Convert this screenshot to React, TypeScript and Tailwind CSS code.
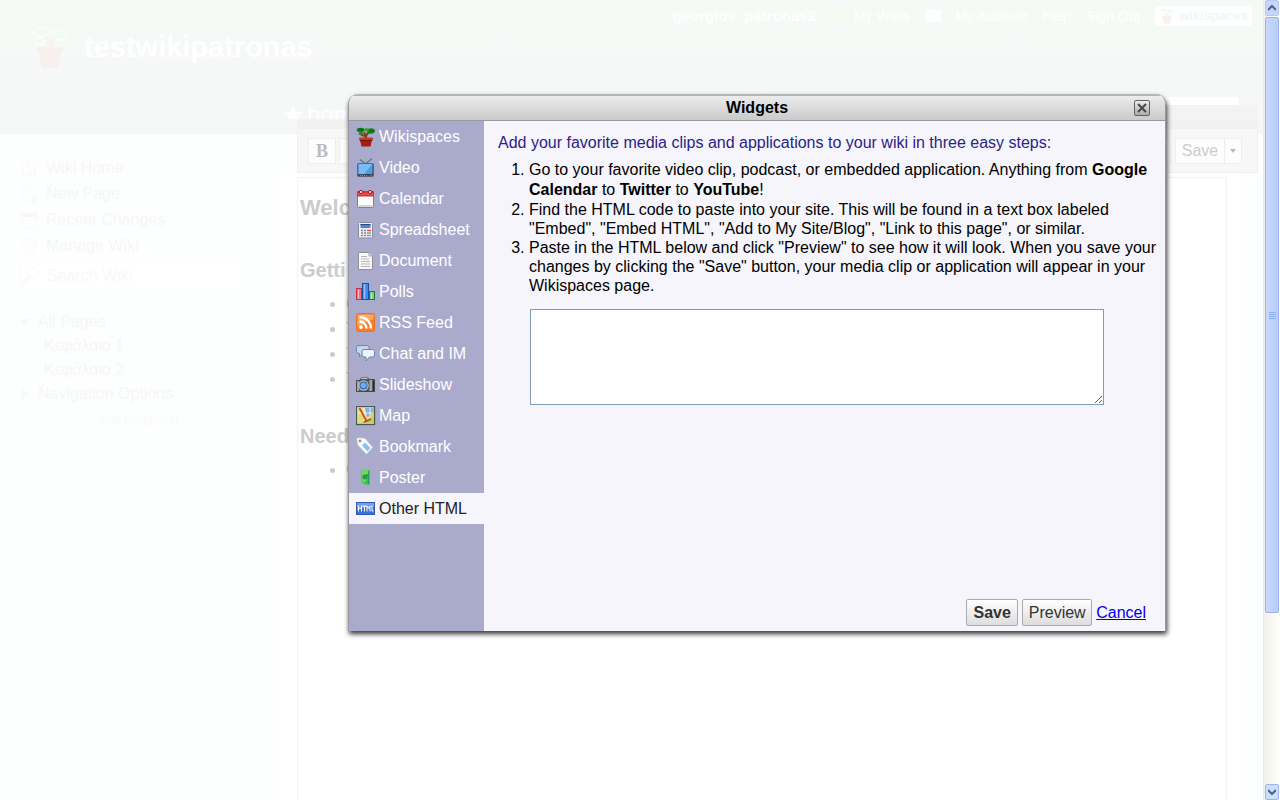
import React, { useState } from 'react';
import clsx from 'clsx';

interface Widget {
    name: string;
    icon: React.ReactNode;
}

const PlantIcon: React.FC<{ className?: string }> = ({ className }) => (
    <svg viewBox="0 0 20 20" className={className} aria-hidden="true">
        <path d="M9.500 12C9 9 9.500 7 8 5M10 11c0-3 1-5 4-6M9.500 9L5 8" stroke="#8a3a1c" strokeWidth="2" fill="none" />
        <ellipse cx="4.500" cy="3" rx="3.800" ry="2.200" fill="#157a1c" />
        <ellipse cx="15" cy="4" rx="4" ry="2.800" fill="#118516" />
        <ellipse cx="5" cy="6.500" rx="2.500" ry="1.500" fill="#1c8a20" />
        <ellipse cx="10.500" cy="2.800" rx="2.500" ry="1.800" fill="#2ea62c" />
        <path d="M2.500 3l5-.5M13 4l4-.5" stroke="#0a4d10" strokeWidth="0.800" />
        <path d="M4 13h12l-1.500 6.500h-9z" fill="#a81c12" />
        <rect x="3" y="10.500" width="14" height="3" rx="1" fill="#c23a26" />
        <path d="M4 13.500h12" stroke="#741008" />
    </svg>
);

const FaintPlantIcon: React.FC<{ className?: string }> = ({ className }) => (
    <svg viewBox="0 0 36 42" className={className} aria-hidden="true">
        <path d="M18 20c-3-5-1-9-6-12M19 20c0-6 3-9 7-12" stroke="#fbf1ee" strokeWidth="3" fill="none" />
        <ellipse cx="10" cy="5" rx="9" ry="4" fill="#f2faf3" stroke="#fbfefb" strokeWidth="1.500" />
        <ellipse cx="28" cy="8" rx="7" ry="5" fill="#f2faf3" stroke="#fbfefb" strokeWidth="1.500" />
        <ellipse cx="8" cy="14" rx="5" ry="3" fill="#f2faf3" stroke="#fbfefb" strokeWidth="1.500" />
        <path d="M5 20h26v5h-2l-3 16H10L7 25H5z" fill="#f8efef" />
    </svg>
);

/**
 * Widget categories, in the order of the menu
 */
const widgets: Widget[] = [
    { name: 'Wikispaces', icon: <PlantIcon className="size-5" /> },
    {
        name: 'Video',
        icon: (
            <svg viewBox="0 0 20 20" className="size-5" aria-hidden="true">
                <path d="M4 1.500l5 4M16 .5l-6 5" stroke="#5d7390" strokeWidth="1.200" />
                <rect x="1.500" y="5.500" width="16" height="13" rx="1" fill="#3d4654" stroke="#62656d" />
                <rect x="2.500" y="6" width="14" height="10" fill="#4b9be8" />
                <path d="M2.500 6h14L8 16H2.500z" fill="#79bbf5" />
                <path d="M4 17.500h7" stroke="#8b8f96" strokeDasharray="1 1" />
                <path d="M14 17.500h2" stroke="#e33" />
            </svg>
        ),
    },
    {
        name: 'Calendar',
        icon: (
            <svg viewBox="0 0 20 20" className="size-5" aria-hidden="true">
                <rect x="1.500" y="2.500" width="16" height="16" rx="1" fill="#fbfbfb" stroke="#8c7a86" />
                <rect x="1" y="2" width="17" height="5.500" rx="1" fill="#dc2f36" />
                <path d="M2 5h15" stroke="#f0666a" />
                <circle cx="5" cy="3" r="1.600" fill="#fbeaea" stroke="#8a1a22" />
                <circle cx="14" cy="3" r="1.600" fill="#fbeaea" stroke="#8a1a22" />
                <path d="M2.500 17h14" stroke="#d5d5dc" strokeWidth="2" />
            </svg>
        ),
    },
    {
        name: 'Spreadsheet',
        icon: (
            <svg viewBox="0 0 20 20" className="size-5" aria-hidden="true">
                <rect x="2.500" y="2.500" width="14" height="15.500" rx="1" fill="#f0f1f4" stroke="#8b8c97" />
                <rect x="4.500" y="4" width="10" height="4" fill="#5584cf" />
                <path d="M4.500 4.500h10" stroke="#274887" />
                <path d="M5 10.500h7M5 13h7M5 15.500h7" stroke="#7c879c" strokeWidth="1.500" strokeDasharray="2 1" />
                <path d="M12 10.500h3" stroke="#ea4a32" strokeWidth="1.500" />
                <path d="M12 13h3M12 15.500h3" stroke="#8d95b8" strokeWidth="1.500" />
            </svg>
        ),
    },
    {
        name: 'Document',
        icon: (
            <svg viewBox="0 0 20 20" className="size-5" aria-hidden="true">
                <path d="M2.500 1.500h10.500l3.500 3.500v13.500h-14z" fill="#fafafa" stroke="#8f8f99" />
                <path d="M13 1.500V5h3.500" fill="#dcdce2" stroke="#a5a5ad" />
                <path d="M5 5.500h6M5 8h8M5 10.500h9M5 13h9M5 15.500h9" stroke="#b5b5bb" />
            </svg>
        ),
    },
    {
        name: 'Polls',
        icon: (
            <svg viewBox="0 0 20 20" className="size-5" aria-hidden="true">
                <rect x="0.500" y="6.500" width="5" height="11" fill="#f0747c" stroke="#c8323e" />
                <rect x="6.500" y="1.500" width="6" height="16" fill="#4589e8" stroke="#1c4bb4" />
                <path d="M8.500 2v15" stroke="#93c5fb" strokeWidth="1.500" />
                <rect x="13.500" y="9.500" width="5" height="8" fill="#7ccf88" stroke="#1f7a34" />
                <path d="M2.500 8v9M15.500 11v6" stroke="#fff" opacity=".5" />
            </svg>
        ),
    },
    {
        name: 'RSS Feed',
        icon: (
            <svg viewBox="0 0 20 20" className="size-5" aria-hidden="true">
                <rect x="0.500" y="0.500" width="18" height="18" rx="2" fill="#f87d27" stroke="#f0701e" />
                <path d="M1.500 1.500h16v5q-8 1-16 8z" fill="#fba869" />
                <circle cx="5" cy="14" r="1.900" fill="#fff" />
                <path d="M3.500 8.500a7 7 0 0 1 7 7M3.500 4a11.500 11.500 0 0 1 11.500 11.500" stroke="#fff" strokeWidth="2.400" fill="none" />
            </svg>
        ),
    },
    {
        name: 'Chat and IM',
        icon: (
            <svg viewBox="0 0 20 20" className="size-5" aria-hidden="true">
                <path d="M2 1.500h9q2 0 2 2v4q0 2-2 2H7l-3.500 3.500v-3.500Q1 9.500 .5 7.500V3.500q0-2 1.500-2z" fill="#c3d6ee" stroke="#6b87b0" />
                <path d="M8 5.500h8.500q2 0 2 2V11q0 2-2 2h-3l-3.500 4v-4H8q-2 0-2-2V7.500q0-2 2-2z" fill="#edf3fb" stroke="#6486b4" />
            </svg>
        ),
    },
    {
        name: 'Slideshow',
        icon: (
            <svg viewBox="0 0 20 20" className="size-5" aria-hidden="true">
                <path d="M.5 5.500h3l2-2.500h6l2 1.500h5v12H.5z" fill="#55575c" stroke="#44464a" />
                <path d="M1 6h2v10H1zM13.500 5h2.500v11h-2.500z" fill="#a4a6ab" />
                <path d="M5.500 3.500h6" stroke="#c6c6ca" />
                <circle cx="7.500" cy="10.500" r="5.200" fill="#b7bcc6" />
                <circle cx="7.500" cy="10.500" r="4" fill="#3d6eae" />
                <circle cx="7.500" cy="10.500" r="2.800" fill="#6aaef0" />
                <path d="M17.500 6v10" stroke="#2a2a2c" />
            </svg>
        ),
    },
    {
        name: 'Map',
        icon: (
            <svg viewBox="0 0 20 20" className="size-5" aria-hidden="true">
                <rect x="0.500" y="0.500" width="18" height="18" fill="#dfe6a4" stroke="#4b5553" strokeWidth="1.300" />
                <path d="M9 2h8.500v7L11 11z" fill="#82afe6" />
                <path d="M1.500 1.500h4l5 13h-9z" fill="#d9dd7c" />
                <path d="M8 2v14M2 7h15M14 2v15" stroke="#f8f4cf" />
                <path d="M3 17.500L17.500 10v7.500z" fill="#b5cf69" />
                <path d="M2 16l6-4 4 2 5-6" stroke="#f3d34f" strokeWidth="1.500" fill="none" />
                <path d="M3.500 2l7 13M15 13l-4 2-3 1" stroke="#e0382b" strokeWidth="1.600" fill="none" />
            </svg>
        ),
    },
    {
        name: 'Bookmark',
        icon: (
            <svg viewBox="0 0 20 20" className="size-5" aria-hidden="true">
                <path d="M.5 2L2 .5l7 .5L17 10.500 10.500 17.500 1.500 8z" fill="#fafbfc" stroke="#b2b6c2" />
                <path d="M6 8.500L9 5.500l5.500 5.500-3 3.500z" fill="#86c4f8" />
                <circle cx="4" cy="4" r="1.400" fill="#8b91a5" />
            </svg>
        ),
    },
    {
        name: 'Poster',
        icon: (
            <svg viewBox="0 0 20 20" className="size-5" aria-hidden="true">
                <path d="M5 3l8-1v14l-1.500 1L6 15z" fill="#3cc243" />
                <path d="M5 3l8-1-.5 5L6 8z" fill="#66de4f" />
                <path d="M7 7l5-1-1 5H7z" fill="#2a9a4a" />
                <path d="M6 11l5 1-4 3z" fill="#6ce05a" />
                <path d="M12 3l1.500-1v14L12 17z" fill="#2c9f58" />
            </svg>
        ),
    },
    {
        name: 'Other HTML',
        icon: (
            <svg viewBox="0 0 20 20" className="size-5" aria-hidden="true">
                <rect x="0.500" y="3.500" width="18" height="12" fill="#3a73d2" stroke="#2d5db6" />
                <path d="M1 4h17v4Q10 7 1 11z" fill="#6f9fea" />
                <path d="M2.500 6.500v6M5.500 6.500v6M2.500 9.500h3M6.500 7h4M8.500 7v5.500M11 12.500V7l1.500 2.500L14 7v5.500M16 6.500V12h1.500" stroke="#fff" fill="none" />
            </svg>
        ),
    },
];

const AccountBar: React.FC = () => (
    <nav className="flex h-8 items-center justify-end gap-[5px] pr-[11px] text-sm text-white">
        <b className="mr-2 text-[15px]">georgios_patronas2</b>
        <svg viewBox="0 0 20 16" className="h-4 w-5" aria-hidden="true">
            <path d="M2 14Q2 5 11 5V1l7 6-7 5V9Q5 9 2 14z" fill="#f6fae9" />
        </svg>
        <a href="#wikis">My Wikis</a>
        <span>·</span>
        <svg viewBox="0 0 18 14" className="h-3 w-4" aria-hidden="true">
            <rect width="18" height="14" fill="#fff" />
            <path d="M3 2l6 5 6-5" stroke="#f5f8f7" fill="none" />
        </svg>
        <span>·</span>
        <a href="#account">My Account</a>
        <span>·</span>
        <a href="#help">Help</a>
        <span>·</span>
        <a href="#signout">Sign Out</a>
        <span>·</span>
        <a href="#wikispaces" className="flex h-5 w-[97px] items-center gap-1 rounded-sm bg-white px-1 text-[13px] font-bold text-[#f3f6f4]">
            <FaintPlantIcon className="size-4" />
            wikispaces
        </a>
    </nav>
);

const SideNav: React.FC = () => (
    <aside className="w-[279px] shrink-0 border-r border-[#fbfdfc] pt-[21px] pl-5 text-[#f6f6f6]">
        <ul>
            <li className="flex h-[26px] items-center gap-2">
                <svg viewBox="0 0 18 18" className="size-[18px]" fill="none" stroke="#fcf5f5" aria-hidden="true">
                    <path d="M0 9l9-8 9 8M3 8v9h12V8M7 17v-5h4v5M8 5h2v3H8z" />
                </svg>
                <a href="#home">Wiki Home</a>
            </li>
            <li className="flex h-[26px] items-center gap-2">
                <svg viewBox="0 0 18 18" className="size-[18px]" fill="none" stroke="#f9fbfb" aria-hidden="true">
                    <path d="M2 1h9l4 4v12H2zM11 1v4h4" />
                    <path d="M14 11v6M11 14h6" stroke="#f1fcf3" strokeWidth="3" />
                </svg>
                <a href="#new">New Page</a>
            </li>
            <li className="flex h-[26px] items-center gap-2">
                <svg viewBox="0 0 18 18" className="size-[18px]" fill="none" stroke="#faf8f9" aria-hidden="true">
                    <path d="M1 2h16v15H1z" />
                    <path d="M1 4h16" stroke="#fdf4f4" strokeWidth="4" />
                </svg>
                <a href="#changes">Recent Changes</a>
            </li>
            <li className="flex h-[26px] items-center gap-2">
                <svg viewBox="0 0 18 18" className="size-[18px]" fill="none" stroke="#fafafa" aria-hidden="true">
                    <circle cx="9" cy="9" r="6.500" strokeWidth="3" strokeDasharray="3 2" />
                    <circle cx="9" cy="9" r="3" />
                </svg>
                <a href="#manage">Manage Wiki</a>
            </li>
        </ul>
        <label className="mt-1 flex h-[26px] w-[223px] items-center gap-2 border border-[#fafbfb] bg-white">
            <svg viewBox="0 0 18 18" className="size-[18px]" fill="none" stroke="#fafafa" strokeWidth="1.500" aria-hidden="true">
                <circle cx="12" cy="6" r="5" />
                <path d="M8 10l-7 7" strokeWidth="3" />
            </svg>
            <input type="text" placeholder="Search Wiki" aria-label="Search Wiki" className="w-40 outline-none placeholder:text-[#f8f8f8]" />
        </label>
        <ul className="mt-[21px] leading-6">
            <li className="flex items-center gap-2">
                <svg viewBox="0 0 10 10" className="size-[10px]" aria-hidden="true"><path d="M0 2h10L5 9z" fill="#f8f8f8" /></svg>
                <a href="#all">All Pages</a>
            </li>
            <li className="pl-6"><a href="#chapter1">Κεφάλαιο 1</a></li>
            <li className="pl-6"><a href="#chapter2">Κεφάλαιο 2</a></li>
            <li className="flex items-center gap-2">
                <svg viewBox="0 0 10 10" className="size-[10px]" aria-hidden="true"><path d="M2 0v10l7-5z" fill="#f8f8f8" /></svg>
                <a href="#nav">Navigation Options</a>
            </li>
        </ul>
        <a href="#edit" className="block pr-[18px] text-center text-xs leading-7 text-[#fafafa]">edit navigation</a>
    </aside>
);

const Editor: React.FC = () => (
    <main className="z-10 -mt-[37px] flex min-w-0 flex-1 flex-col">
        {/* page title, cut off by the toolbar */}
        <div className="flex h-[22px]">
            <div className="flex flex-1 items-start gap-1 overflow-hidden pl-1 text-2xl leading-9 text-white">
                <svg viewBox="0 0 20 20" className="mt-2 size-5 shrink-0" fill="currentColor" aria-hidden="true">
                    <path d="M10 0l2.800 6.700 7.200.6-5.500 4.700 1.700 7L10 15.200 3.800 19l1.700-7L0 7.300l7.200-.6z" />
                </svg>
                home
            </div>
            <div className="mr-[5px] flex w-[140px] flex-col">
                <div className="mr-5 h-2 bg-white" />
                <div className="flex-1 rounded-tr-sm bg-[#f3f3f3]" />
            </div>
        </div>
        <div className="mr-[5px] ml-[18px] h-[9px] border-t border-[#f4f2f2] bg-[#f1f1f1]" />
        <div className="mr-[5px] ml-[18px] flex h-[45px] items-center gap-[3px] border border-[#f5eeef] bg-[#f7f7f7] px-[10px] text-[#ccc]">
            <button className="h-[26px] w-[28px] border border-[#eee] bg-[#fdfdfd] font-['Liberation_Serif',serif] text-lg leading-5 font-bold text-[#bbb]">B</button>
            <button className="h-[26px] w-[28px] border border-[#eee] bg-[#fdfdfd] font-['Liberation_Serif',serif] text-lg leading-5 italic">I</button>
            <div className="mr-[2px] ml-auto h-[26px] w-6 border border-[#eee] bg-[#fdfdfd]" />
            <div className="mr-[5px] flex h-[26px] border border-[#eee] bg-[#fdfdfd]">
                <button className="w-[48px]">Save</button>
                <button className="flex w-[17px] items-center justify-center border-l border-[#eee]" aria-label="More save options">
                    <svg viewBox="0 0 6 4" className="h-1 w-[6px]" fill="#bbb" aria-hidden="true"><path d="M0 0h6L3 4z" /></svg>
                </button>
            </div>
        </div>
        <div className="mr-6 flex flex-1 bg-white pr-3 pl-[18px]">
            <article className="mt-1 flex-1 border border-b-0 border-[#f2f0fb] pl-[2px] text-[#ccc]">
                <h1 className="mt-4 text-[22px] leading-7 font-bold">Welc</h1>
                <h2 className="mt-[34px] text-xl leading-7 font-bold">Getti</h2>
                <ul className="mt-[7px] list-disc pl-[46px] leading-[25px]">
                    <li>C</li>
                    <li>T</li>
                    <li>T</li>
                    <li>T</li>
                </ul>
                <h2 className="mt-[31px] text-xl leading-7 font-bold">Need</h2>
                <ul className="mt-[7px] list-disc pl-[46px] leading-[25px]">
                    <li>C</li>
                </ul>
            </article>
        </div>
    </main>
);

const ScrollBar: React.FC = () => (
    <div className="flex w-[17px] shrink-0 flex-col border-l border-[#ecebe6] bg-linear-to-r from-[#f2f1eb] to-[#fefefb] px-px" aria-hidden="true">
        <div className="flex h-4 items-center justify-center rounded-xs border border-[#b5c8f3] bg-[#c5d6fd]">
            <svg viewBox="0 0 8 6" className="h-[6px] w-2" fill="none" stroke="#4d6185" strokeWidth="2"><path d="M0 5l4-4 4 4" /></svg>
        </div>
        <div className="mt-px flex flex-[596] flex-col items-center justify-center gap-px rounded-xs border border-[#9bb4ee] bg-linear-to-r from-[#c9d8fd] to-[#b8cdfa]">
            <i className="h-px w-[7px] bg-[#8ab0f8]" />
            <i className="h-px w-[7px] bg-[#8ab0f8]" />
            <i className="h-px w-[7px] bg-[#8ab0f8]" />
            <i className="h-px w-[7px] bg-[#8ab0f8]" />
        </div>
        <div className="flex-[171]" />
        <div className="flex h-4 items-center justify-center rounded-xs border border-[#9db5ec] bg-[#c9e0fc]">
            <svg viewBox="0 0 8 6" className="h-[6px] w-2" fill="none" stroke="#4d6185" strokeWidth="2"><path d="M0 1l4 4 4-4" /></svg>
        </div>
    </div>
);

const WidgetDialog: React.FC = () => {
    const [selected, setSelected] = useState<string>('Other HTML');
    const [html, setHtml] = useState<string>('');

    return (
        <div
            role="dialog"
            aria-labelledby="widgets-title"
            className="w-[818px] overflow-hidden rounded-t-[10px] border-x border-[#999] bg-[#f5f5fb] text-black shadow-[1px_3px_5px_rgba(0,0,0,0.8)]"
        >
            <header className="flex h-[27px] items-center border-t-2 border-b border-t-[#b5b5b5] border-b-[#999] bg-linear-to-b from-[#ececec] to-[#cacaca] pr-[15px] pl-[31px]">
                <h2 id="widgets-title" className="flex-1 text-center leading-5 font-bold">Widgets</h2>
                <button aria-label="Close" className="flex size-4 items-center justify-center rounded-xs border border-[#606060] bg-linear-to-b from-[#eee] to-[#aaa]">
                    <svg viewBox="0 0 12 12" className="size-3" stroke="#4a4a4a" strokeWidth="2.200" aria-hidden="true">
                        <path d="M2 2l8 8M10 2l-8 8" />
                    </svg>
                </button>
            </header>
            <div className="flex">
                <nav className="w-[135px] shrink-0 bg-[#aaaacd]">
                    {widgets.map(widget => (
                        <button
                            key={widget.name}
                            onClick={() => setSelected(widget.name)}
                            className={clsx(
                                "flex h-[31px] w-full items-center gap-[3px] pl-[7px]",
                                selected === widget.name ? "bg-[#f5f5fb] text-[#222]" : "text-white"
                            )}
                        >
                            {widget.icon}
                            {widget.name}
                        </button>
                    ))}
                </nav>
                <section className="flex min-h-[510px] flex-1 flex-col pt-3 pr-[5px] pb-[5px] pl-[14px]">
                    <p className="leading-5 text-[#2a2288]">
                        Add your favorite media clips and applications to your wiki in three easy steps:
                    </p>
                    <ol className="mt-[7px] list-decimal pl-[31px] leading-[19px]">
                        <li className="leading-5">
                            Go to your favorite video clip, podcast, or embedded application. Anything from <b>Google Calendar</b> to <b>Twitter</b> to <b>YouTube</b>!
                        </li>
                        <li>
                            Find the HTML code to paste into your site. This will be found in a text box labeled "Embed", "Embed HTML", "Add to My Site/Blog", "Link to this page", or similar.
                        </li>
                        <li>
                            Paste in the HTML below and click "Preview" to see how it will look. When you save your changes by clicking the "Save" button, your media clip or application will appear in your Wikispaces page.
                        </li>
                    </ol>
                    <textarea
                        aria-label="HTML code"
                        value={html}
                        onChange={(e) => setHtml(e.target.value)}
                        className="mt-[14px] mr-14 ml-8 h-24 border border-[#7f9db9] bg-white p-1 outline-none"
                    />
                    <div className="mt-auto mr-[14px] flex items-center justify-end gap-1">
                        <button className="h-[27px] w-[52px] rounded-xs border border-[#aaa] bg-linear-to-b from-white to-[#ddd] font-bold text-[#333]">Save</button>
                        <button className="h-[27px] w-[70px] rounded-xs border border-[#aaa] bg-linear-to-b from-white to-[#ddd] text-[#333]">Preview</button>
                        <a href="#cancel" className="text-[#0000ee] underline">Cancel</a>
                    </div>
                </section>
            </div>
        </div>
    );
};

const App: React.FC = () => {
    return (
        <div className="relative flex h-screen overflow-hidden bg-[#fdfffe] font-['Liberation_Sans',Arial,sans-serif] text-base">
            <div className="flex min-w-0 flex-1 flex-col">
                <header className="h-[134px] shrink-0 bg-linear-to-b from-[#f5faf6] from-20% to-[#f6f8f8] to-50%">
                    <AccountBar />
                    <div className="flex h-8 items-center gap-4 pl-8 text-[29px] font-bold text-white">
                        <FaintPlantIcon className="h-[42px] w-9" />
                        testwikipatronas
                    </div>
                </header>
                <div className="flex flex-1">
                    <SideNav />
                    <Editor />
                </div>
            </div>
            <ScrollBar />
            <div className="absolute inset-x-0 top-[94px] z-20 pl-[348px]">
                <WidgetDialog />
            </div>
        </div>
    );
};

export default App;
